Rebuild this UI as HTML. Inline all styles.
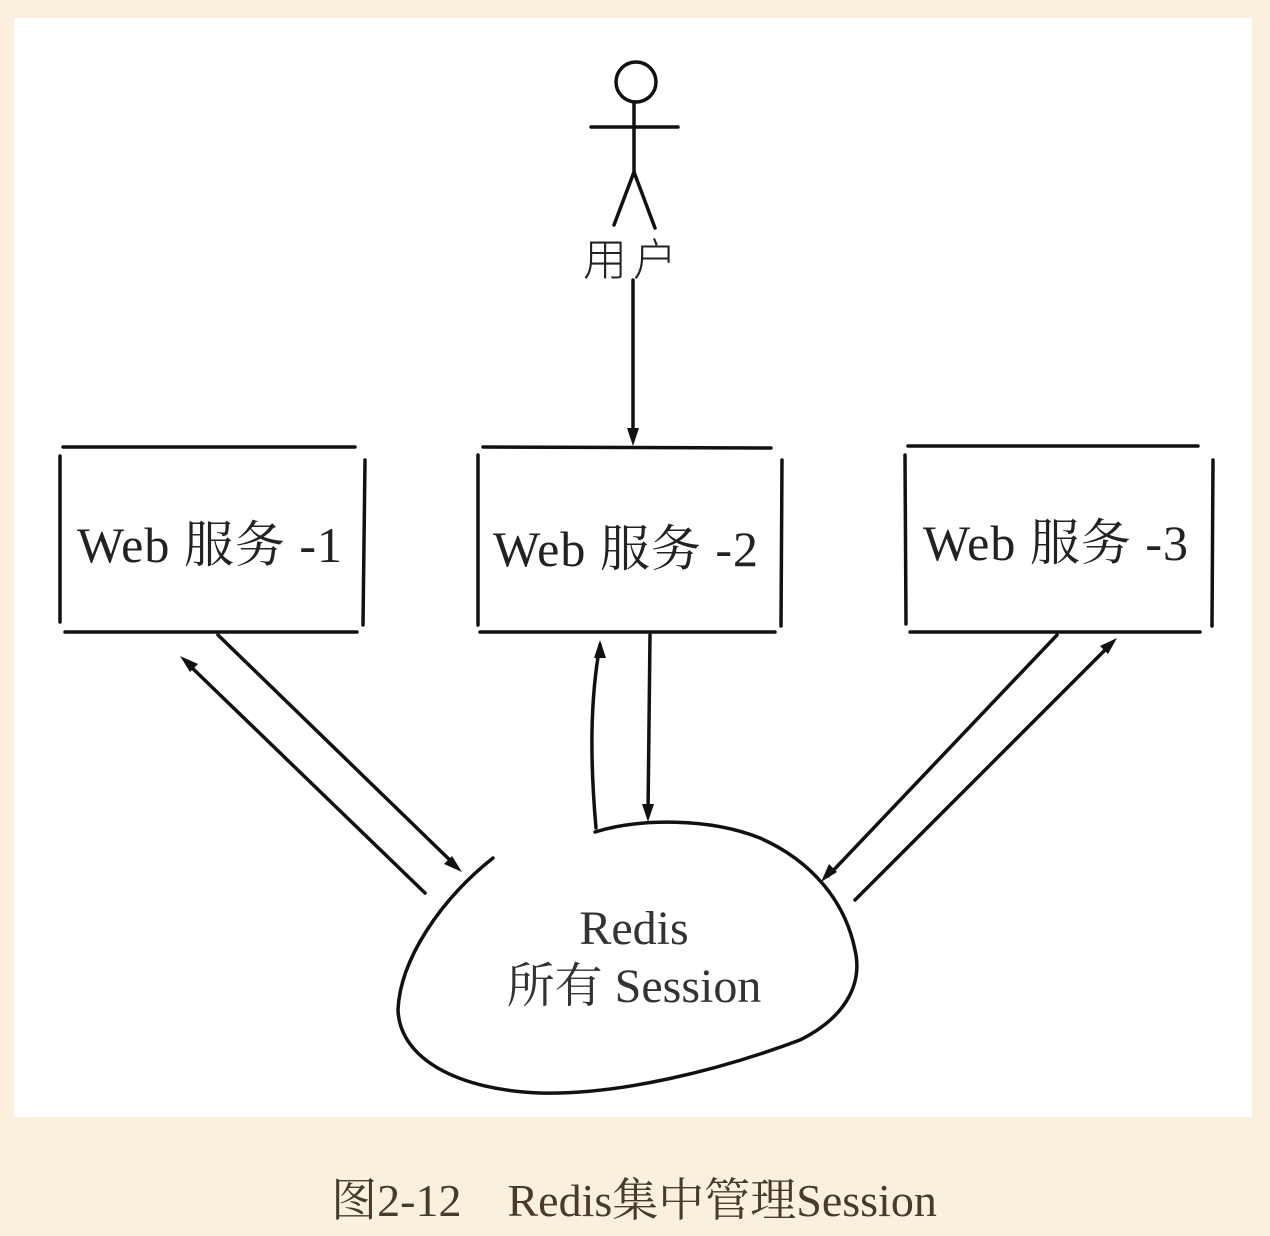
<!DOCTYPE html>
<html><head><meta charset="utf-8"><style>
html,body{margin:0;padding:0;background:#fbf0de;width:1270px;height:1236px;overflow:hidden}
svg{position:absolute;left:0;top:0}
</style></head><body>
<svg width="1270" height="1236" viewBox="0 0 1270 1236">
<rect x="14" y="18" width="1238" height="1099" fill="#fff"/>
<g stroke="#111" stroke-width="3.5" fill="none" stroke-linecap="round">
<circle cx="636" cy="82" r="20"/>
<line x1="591" y1="127" x2="678" y2="127"/>
<line x1="634" y1="102" x2="634" y2="175"/>
<path d="M634 172 L614 225 M634 172 L655 228"/>
<line x1="633" y1="280" x2="633" y2="440"/>
<path d="M63 447 L355 447 M65 632 L357 632 M60 456 L60 622 M365 460 L363 625"/>
<path d="M483 447 L771 448 M480 632 L775 632 M478 455 L478 625 M782 460 L781 626"/>
<path d="M908 446 L1198 446 M910 632 L1200 632 M905 455 L906 624 M1213 460 L1212 626"/>
<line x1="186" y1="662" x2="425" y2="893"/>
<line x1="218" y1="635" x2="456" y2="866"/>
<path d="M596 828 C590 760 590 700 600 645"/>
<line x1="650" y1="635" x2="648" y2="815"/>
<line x1="1057" y1="635" x2="828" y2="876"/>
<line x1="1110" y1="645" x2="855" y2="900"/>
<path d="M493 858 C440 900 400 960 398 1010 C400 1060 460 1090 540 1093 C620 1095 720 1070 800 1040 C850 1015 862 980 855 950 C845 900 810 860 760 838 C710 818 640 818 595 832"/>
</g>
<g fill="#111">
<path d="M633 446 L627 428 L639 428Z"/>
<path d="M180 656 L198 664 L190 672Z"/>
<path d="M462 872 L444 864 L452 856Z"/>
<path d="M600 640 L594 658 L606 658Z"/>
<path d="M648 822 L642 804 L654 804Z"/>
<path d="M821 882 L829 864 L837 872Z"/>
<path d="M1117 638 L1100 646 L1108 654Z"/>
</g>
<g font-family="'Liberation Serif','Noto Serif CJK SC',serif" fill="#222" font-size="50">
<text x="633" y="275" text-anchor="middle" font-size="44" font-family="'Noto Sans CJK SC',sans-serif" font-weight="300" letter-spacing="6">用户</text>
<text x="210" y="562" text-anchor="middle" letter-spacing="1">Web 服务 -1</text>
<text x="626" y="566" text-anchor="middle" letter-spacing="1">Web 服务 -2</text>
<text x="1056" y="560" text-anchor="middle" letter-spacing="1">Web 服务 -3</text>
<text x="634" y="944" text-anchor="middle" font-size="48" fill="#333">Redis</text>
<text x="634" y="1002" text-anchor="middle" font-size="48" fill="#333">所有 Session</text>
</g>
<text x="634" y="1216" text-anchor="middle" font-family="'Liberation Serif','Noto Serif CJK SC',serif" font-size="46" fill="#4a3a2a">图2-12　Redis集中管理Session</text>
</svg>
</body></html>
